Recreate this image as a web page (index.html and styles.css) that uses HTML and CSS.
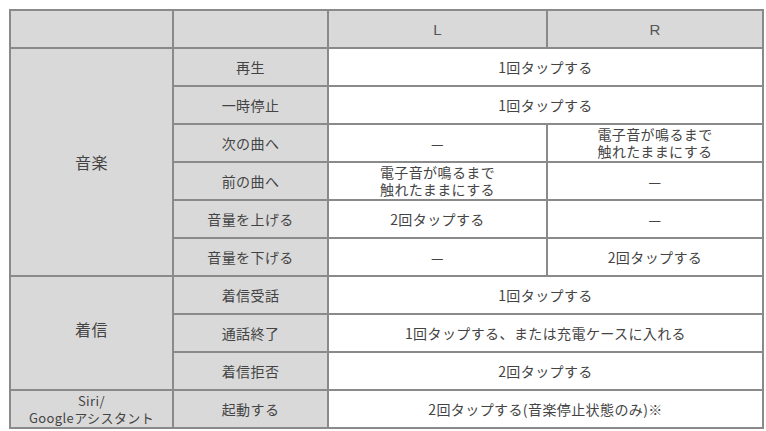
FILE: index.html
```html
<!DOCTYPE html>
<html lang="ja">
<head>
<meta charset="utf-8">
<link rel="stylesheet" href="styles.css">
</head>
<body>
<table class="ops">
  <colgroup>
    <col class="c1"><col class="c2"><col class="c3"><col class="c4">
  </colgroup>
  <thead>
    <tr class="head"><th class="gray"></th><th class="gray"></th><th class="gray">L</th><th class="gray">R</th></tr>
  </thead>
  <tbody>
    <tr><th class="gray group" rowspan="6">音楽</th><th class="gray label">再生</th><td colspan="2">1回タップする</td></tr>
    <tr><th class="gray label">一時停止</th><td colspan="2">1回タップする</td></tr>
    <tr><th class="gray label">次の曲へ</th><td>—</td><td class="two">電子音が鳴るまで<br>触れたままにする</td></tr>
    <tr><th class="gray label">前の曲へ</th><td class="two">電子音が鳴るまで<br>触れたままにする</td><td>—</td></tr>
    <tr><th class="gray label">音量を上げる</th><td>2回タップする</td><td>—</td></tr>
    <tr><th class="gray label">音量を下げる</th><td>—</td><td>2回タップする</td></tr>
    <tr><th class="gray group" rowspan="3"><span class="group-label">着信</span></th><th class="gray label">着信受話</th><td colspan="2">1回タップする</td></tr>
    <tr><th class="gray label">通話終了</th><td colspan="2" class="spaced">1回タップする、または充電ケースに入れる</td></tr>
    <tr><th class="gray label">着信拒否</th><td colspan="2">2回タップする</td></tr>
    <tr><th class="gray small">Siri/<br>Googleアシスタント</th><th class="gray label">起動する</th><td colspan="2" class="wide">2回タップする(音楽停止状態のみ)※</td></tr>
  </tbody>
</table>
</body>
</html>
```
FILE: styles.css
```css
html, body {
  margin: 0;
  background: #ffffff;
}
body {
  padding: 9px 0 0 9px;
  font-family: "Noto Sans CJK JP", "Noto Sans", sans-serif;
  color: #444444;
}
.ops {
  border-collapse: collapse;
  table-layout: fixed;
  width: 753px;
  font-size: 14px;
}
.c1 { width: 163px; }
.c2 { width: 155px; }
.c3 { width: 219px; }
.c4 { width: 216px; }
.ops th, .ops td {
  border: 2px solid #8a8a8a;
  height: 36px;
  padding: 0;
  text-align: center;
  vertical-align: middle;
  font-weight: 400;
  line-height: 17px;
  letter-spacing: 0.4px;
}
.gray { background: #d9d9d9; }
.head th { font-family: "Liberation Sans", "Noto Sans CJK JP", sans-serif; font-size: 15px; color: #555555; }
.label { letter-spacing: 2px; }
.group { font-size: 16px; letter-spacing: 2px; }
.group-label { position: relative; top: -4px; }
.spaced { letter-spacing: 1px; }
.wide { letter-spacing: 1.6px; }
.small { font-size: 13px; line-height: 14px; letter-spacing: 0; }
.two { line-height: 18px; }
```
